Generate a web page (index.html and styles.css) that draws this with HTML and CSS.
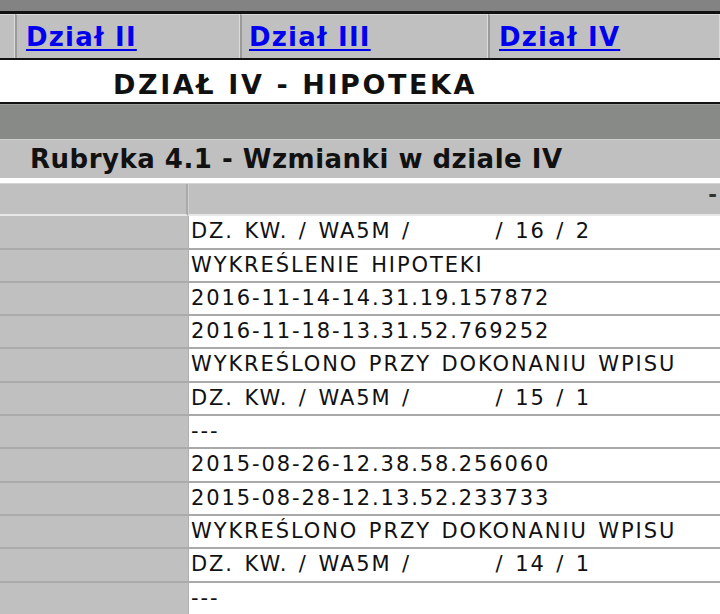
FILE: index.html
```html
<!DOCTYPE html>
<html lang="pl">
<head>
<meta charset="utf-8">
<link rel="stylesheet" href="styles.css">
</head>
<body>
<div class="topbar"></div>
<div class="tabs">
  <div class="tab tab-first"></div>
  <div class="tab tab-2"><a href="#">Dział II</a></div>
  <div class="tab tab-3"><a href="#">Dział III</a></div>
  <div class="tab tab-4"><a href="#">Dział IV</a></div>
</div>
<div class="title">DZIAŁ IV - HIPOTEKA</div>
<div class="darkband"></div>
<div class="rubryka">Rubryka 4.1 - Wzmianki w dziale IV</div>
<div class="grid">
  <div class="row head"><div class="lc"></div><div class="rc"><span class="mark">-</span></div></div>
  <div class="row"><div class="lc"></div><div class="rc"><pre>DZ. KW. / WA5M /        / 16 / 2</pre></div></div>
  <div class="row"><div class="lc"></div><div class="rc">WYKREŚLENIE HIPOTEKI</div></div>
  <div class="row"><div class="lc"></div><div class="rc">2016-11-14-14.31.19.157872</div></div>
  <div class="row"><div class="lc"></div><div class="rc">2016-11-18-13.31.52.769252</div></div>
  <div class="row"><div class="lc"></div><div class="rc">WYKREŚLONO PRZY DOKONANIU WPISU</div></div>
  <div class="row"><div class="lc"></div><div class="rc"><pre>DZ. KW. / WA5M /        / 15 / 1</pre></div></div>
  <div class="row"><div class="lc"></div><div class="rc">---</div></div>
  <div class="row"><div class="lc"></div><div class="rc">2015-08-26-12.38.58.256060</div></div>
  <div class="row"><div class="lc"></div><div class="rc">2015-08-28-12.13.52.233733</div></div>
  <div class="row"><div class="lc"></div><div class="rc">WYKREŚLONO PRZY DOKONANIU WPISU</div></div>
  <div class="row"><div class="lc"></div><div class="rc"><pre>DZ. KW. / WA5M /        / 14 / 1</pre></div></div>
  <div class="row"><div class="lc"></div><div class="rc">---</div></div>
</div>
</body>
</html>
```
FILE: styles.css
```css
html, body {
  margin: 0;
  padding: 0;
  background: #ffffff;
  font-family: "DejaVu Sans", Verdana, sans-serif;
  overflow: hidden;
}
.topbar {
  height: 11px;
  background: #828382;
  border-bottom: 3px solid #111;
}
.tabs {
  display: flex;
  height: 44px;
  background: #c0c0c0;
}
.tab {
  box-sizing: border-box;
  height: 44px;
  border-left: 2px solid #9a9a9a;
  border-right: 1px solid #dcdcdc;
  border-top: 1px solid #d8d8d8;
  padding-left: 9px;
  display: flex;
  align-items: center;
}
.tab-first { width: 15px; border-left: none; padding: 0; }
.tab-2 { width: 225px; }
.tab-3 { width: 248px; padding-left: 7px; }
.tab-4 { flex: 1; }
.tab a {
  color: #0000ee;
  font-weight: bold;
  font-size: 26px;
  letter-spacing: 1.2px;
  text-decoration: underline;
  text-decoration-thickness: 2px;
  text-underline-offset: 3px;
  margin-top: 1px;
}
.title {
  box-sizing: border-box;
  height: 46px;
  border-top: 2px solid #111;
  border-bottom: 2px solid #111;
  padding-left: 113px;
  padding-top: 5px;
  font-weight: bold;
  font-size: 27px;
  letter-spacing: 2.6px;
  line-height: 39px;
  color: #111;
}
.darkband {
  height: 34px;
  background: #878a87;
  border-top: 1px solid #9c9e9c;
}
.rubryka {
  height: 38px;
  background: #c0c0c0;
  padding-left: 30px;
  font-weight: bold;
  font-size: 26px;
  letter-spacing: 0.5px;
  line-height: 39px;
  color: #111;
  border-bottom: 5px solid #ffffff;
  border-top: 1px solid #d0d0d0;
}
.grid {
  display: flex;
  flex-direction: column;
}
.row {
  display: flex;
  height: 33.3px;
  box-sizing: border-box;
}
.lc {
  width: 188px;
  flex: none;
  background: #c0c0c0;
  border-bottom: 2px solid #ababab;
  box-sizing: border-box;
}
.rc {
  flex: 1;
  background: #ffffff;
  border-bottom: 2px solid #a9a9a9;
  border-left: 1px solid #b0b0b0;
  box-sizing: border-box;
  padding-left: 2px;
  font-size: 21px;
  letter-spacing: 1.9px;
  word-spacing: 2px;
  line-height: 31px;
  color: #111;
  white-space: nowrap;
  overflow: hidden;
}
.rc pre {
  margin: 0;
  font: inherit;
  letter-spacing: inherit;
  word-spacing: inherit;
}
.head {
  border-top: 1px solid #d4d4d4;
}
.head .lc {
  border-right: 2px solid #aaa;
  border-bottom: 2px solid #e8e8e8;
}
.head .rc {
  background: #c0c0c0;
  border-bottom: 2px solid #e8e8e8;
  border-left: 1px solid #d0d0d0;
  text-align: right;
  line-height: 22px;
}
.mark {
  display: inline-block;
  margin-right: 3px;
  font-weight: bold;
  letter-spacing: 0;
  color: #333;
}
```
